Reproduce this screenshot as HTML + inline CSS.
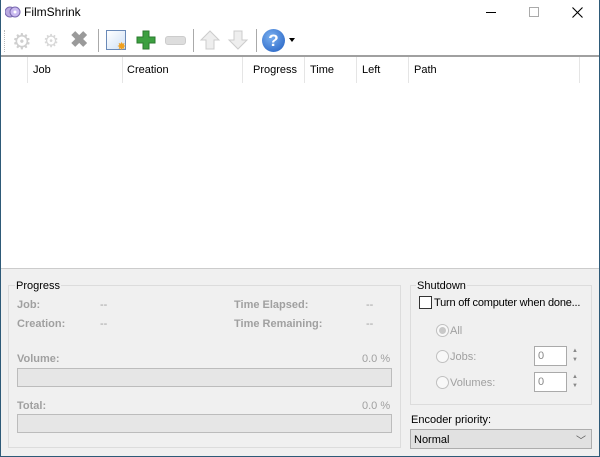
<!DOCTYPE html><html><head><style>
*{box-sizing:border-box;margin:0;padding:0}
body{width:600px;height:457px;position:relative;overflow:hidden;background:#f0f0f0;font-family:"Liberation Sans",sans-serif;font-size:11px;color:#000}
.a{position:absolute}
.g{color:#a0a0a0;font-weight:bold}
.gl{color:#a0a0a0}
.bar{position:absolute;left:17px;width:375px;height:19px;background:#e6e6e6;border:1px solid #bcbcbc}
.hd{position:absolute;top:64px;font-size:11px}
.sep{position:absolute;top:57px;width:1px;height:26px;background:#e5e5e5}
.rad{position:absolute;width:13px;height:13px;border-radius:50%;border:1px solid #c0c0c0;background:#f8f8f8}
.spin{position:absolute;left:534px;width:33px;height:20px;border:1px solid #aaa;background:#fff;padding:3px 0 0 3px;color:#888}
.arr{position:absolute;left:569px;width:12px;font-size:6px;color:#888;line-height:9px;text-align:center}
</style></head><body>
<div class="a" style="left:0;top:0;width:600px;height:56px;background:#fff"></div>
<div class="a" style="left:0;top:0;width:1px;height:457px;background:#2e5a78"></div>
<div class="a" style="right:0;top:0;width:1px;height:457px;background:#2e5a78"></div>
<div class="a" style="left:0;bottom:0;width:600px;height:1px;background:#2e5a78"></div>
<svg class="a" style="left:5px;top:5px" width="16" height="14"><circle cx="5" cy="7" r="5" fill="#b9a9e0" stroke="#7a6ab0"/><circle cx="10" cy="7" r="5" fill="#c9b9f0" stroke="#7a6ab0"/><circle cx="10" cy="7" r="1.5" fill="#fff"/></svg>
<div class="a" style="left:24px;top:5px;font-size:12px">FilmShrink</div>
<div class="a" style="left:486px;top:12px;width:10px;height:1px;background:#000"></div>
<div class="a" style="left:529px;top:7px;width:10px;height:10px;border:1px solid #aaa"></div>
<svg class="a" style="left:572px;top:7px" width="11" height="11"><path d="M0.5 0.5L10.5 10.5M10.5 0.5L0.5 10.5" stroke="#000" stroke-width="1.1"/></svg>
<!-- toolbar -->
<div class="a" style="left:4px;top:30px;width:1px;height:22px;border-left:1px dotted #bbb"></div>
<div class="a" style="left:12px;top:29px;font-size:22px;color:#cfcfcf">⚙</div>
<div class="a" style="left:43px;top:31px;font-size:18px;color:#d8d8d8">⚙</div>
<div class="a" style="left:70px;top:27px;font-size:22px;color:#9a9a9a;font-weight:bold">✖</div>
<div class="a" style="left:98px;top:29px;width:1px;height:23px;background:#aaa"></div>
<div class="a" style="left:106px;top:30px;width:20px;height:20px;border:1px solid #6a8ab8;background:linear-gradient(135deg,#fff,#cfe0f5)"></div>
<div class="a" style="left:117px;top:40px;font-size:11px;color:#f0a020">✸</div>
<svg class="a" style="left:135px;top:29px" width="22" height="22"><path d="M8 2h6v6h6v6h-6v6h-6v-6h-6v-6h6z" fill="#3ca040" stroke="#2a7a2e"/></svg>
<div class="a" style="left:165px;top:36px;width:21px;height:9px;border-radius:3px;background:#ddd;border:1px solid #ccc"></div>
<div class="a" style="left:193px;top:29px;width:1px;height:23px;background:#aaa"></div>
<svg class="a" style="left:199px;top:29px" width="22" height="22"><path d="M11 2l9 9h-5v9h-8v-9h-5z" fill="#eee" stroke="#ccc"/></svg>
<svg class="a" style="left:227px;top:29px" width="22" height="22"><path d="M11 20l9-9h-5v-9h-8v9h-5z" fill="#eee" stroke="#ccc"/></svg>
<div class="a" style="left:256px;top:29px;width:1px;height:23px;background:#aaa"></div>
<div class="a" style="left:262px;top:29px;width:23px;height:23px;border-radius:50%;background:radial-gradient(circle at 40% 35%,#7ab0f0,#1e5cc0);color:#fff;font-weight:bold;font-size:17px;text-align:center;line-height:23px">?</div>
<div class="a" style="left:289px;top:38px;border:3.5px solid transparent;border-top:4px solid #000"></div>
<!-- list -->
<div class="a" style="left:1px;top:55px;width:598px;height:214px;background:#fff;border-top:2px solid #a0a0a0;border-bottom:1px solid #ccc"></div>
<div class="sep" style="left:27px"></div><div class="sep" style="left:122px"></div><div class="sep" style="left:242px"></div><div class="sep" style="left:304px"></div><div class="sep" style="left:356px"></div><div class="sep" style="left:408px"></div><div class="sep" style="left:579px"></div>
<div class="hd" style="left:33px">Job</div><div class="hd" style="left:127px">Creation</div><div class="hd" style="left:253px">Progress</div><div class="hd" style="left:310px">Time</div><div class="hd" style="left:362px">Left</div><div class="hd" style="left:414px">Path</div>
<!-- progress group -->
<div class="a" style="left:8px;top:285px;width:393px;height:163px;border:1px solid #dcdcdc"></div>
<div class="a" style="left:15px;top:280px;background:#f0f0f0;padding:0 1px">Progress</div>
<div class="a g" style="left:17px;top:299px">Job:</div>
<div class="a g" style="left:17px;top:318px">Creation:</div>
<div class="a gl" style="left:100px;top:299px">--</div>
<div class="a gl" style="left:100px;top:318px">--</div>
<div class="a g" style="left:234px;top:299px">Time Elapsed:</div>
<div class="a g" style="left:234px;top:318px">Time Remaining:</div>
<div class="a gl" style="left:366px;top:299px">--</div>
<div class="a gl" style="left:366px;top:318px">--</div>
<div class="a g" style="left:17px;top:353px">Volume:</div>
<div class="a gl" style="left:362px;top:353px">0.0 %</div>
<div class="bar" style="top:368px"></div>
<div class="a g" style="left:17px;top:400px">Total:</div>
<div class="a gl" style="left:362px;top:400px">0.0 %</div>
<div class="bar" style="top:414px"></div>
<!-- shutdown -->
<div class="a" style="left:410px;top:285px;width:182px;height:120px;border:1px solid #dcdcdc"></div>
<div class="a" style="left:416px;top:280px;background:#f0f0f0;padding:0 1px">Shutdown</div>
<div class="a" style="left:419px;top:296px;width:13px;height:13px;border:1px solid #333;background:#fff"></div>
<div class="a" style="left:434px;top:297px;letter-spacing:-0.2px">Turn off computer when done...</div>
<div class="rad" style="left:436px;top:324px"><div style="margin:2px;width:7px;height:7px;border-radius:50%;background:#c8c8c8"></div></div>
<div class="a gl" style="left:450px;top:325px">All</div>
<div class="rad" style="left:436px;top:350px"></div><div class="a gl" style="left:450px;top:351px">Jobs:</div>
<div class="rad" style="left:436px;top:376px"></div><div class="a gl" style="left:450px;top:377px">Volumes:</div>
<div class="spin" style="top:346px">0</div><div class="arr" style="top:347px">▲<br>▼</div>
<div class="spin" style="top:372px">0</div><div class="arr" style="top:373px">▲<br>▼</div>
<div class="a" style="left:411px;top:414px">Encoder priority:</div>
<div class="a" style="left:410px;top:429px;width:182px;height:20px;background:#e1e1e1;border:1px solid #adadad;padding:4px 0 0 3px">Normal<span style="position:absolute;right:5px;top:2px;font-size:10px;color:#555">﹀</span></div>
</body></html>
